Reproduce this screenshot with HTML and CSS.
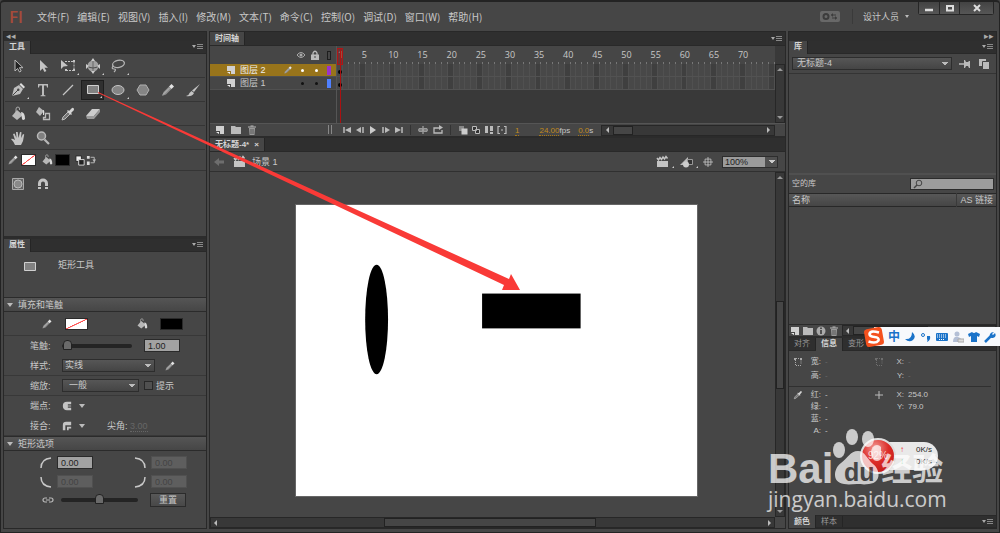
FILE: index.html
```
<!DOCTYPE html>
<html lang="zh-CN">
<head>
  <meta charset="UTF-8">
  <title>无标题-4</title>
  <link rel="stylesheet" href="styles.css">
</head>
<body>
  <!-- icon sprite -->
  <svg class="sprite">
    <symbol id="i-select" viewBox="0 0 16 16"><path d="M5 2v11l2.600-2.500L9.500 14l1.700-1-1.800-3.300H13z" fill="#222" stroke="#bbb"/></symbol>
    <symbol id="i-arrow" viewBox="0 0 16 16"><path d="M5 2v11l2.600-2.500L9.500 14l1.900-1-1.900-3.300H13z" fill="#c4c4c4"/></symbol>
    <symbol id="i-transform" viewBox="0 0 16 16"><path d="M1 2v9l2.500-2.500L8 8z" fill="#c4c4c4"/><path d="M5 3.500h9v9H5" fill="none" stroke="#c4c4c4" stroke-dasharray="2 1"/><path d="M13 2h2v2h-2zM13 11h2v2h-2zM5 11h2v2H5z" fill="#c4c4c4"/></symbol>
    <symbol id="i-rotate" viewBox="0 0 16 16"><circle cx="8" cy="8" r="5.500" fill="#a2a2a2"/><path d="M8 2v12" stroke="#666"/><path d="M2 8q6 4 12 0" stroke="#4a4a4a" fill="none"/><path d="M8 0l2 3H6zM8 16l2-3H6zM1 6l3 2-3 3zM15 6l-3 2 3 3z" fill="#ccc"/></symbol>
    <symbol id="i-lasso" viewBox="0 0 16 16"><ellipse cx="8.500" cy="6" rx="6" ry="3.500" transform="rotate(-12 8 6)" fill="none" stroke="#b5b5b5" stroke-width="1.300"/><path d="M3 8q-2 3 1 3t0 3" fill="none" stroke="#b5b5b5" stroke-width="1.200"/></symbol>
    <symbol id="i-pen" viewBox="0 0 16 16"><path d="M2 14l2-8 5-3 4 4-3 5z" fill="#bdbdbd"/><path d="M9.500 2.500L11 1l4 4-1.500 1.500z" fill="#ddd"/><path d="M2.500 13.500L8 8" stroke="#444"/><circle cx="8.300" cy="7.700" r="1.200" fill="#444"/></symbol>
    <symbol id="i-text" viewBox="0 0 16 16"><path d="M3 2h10v3.500h-1L11.500 3.500H9V13l1.500.5v.8h-5v-.8L7 13V3.500H4.500L4 5.500H3z" fill="#bbb"/></symbol>
    <symbol id="i-line" viewBox="0 0 16 16"><path d="M3 13L13 3" stroke="#c4c4c4" stroke-width="1.200"/></symbol>
    <symbol id="i-rect" viewBox="0 0 16 16"><path d="M2.500 3.500h11v8h-11z" fill="#828282" stroke="#d0d0d0"/></symbol>
    <symbol id="i-oval" viewBox="0 0 16 16"><ellipse cx="8" cy="8" rx="6" ry="4.500" fill="#858585" stroke="#c4c4c4"/></symbol>
    <symbol id="i-poly" viewBox="0 0 16 16"><path d="M5 3h6l3 5-3 5H5L2 8z" fill="#858585" stroke="#b0b0b0"/></symbol>
    <symbol id="i-pencil" viewBox="0 0 16 16"><path d="M2 14l1.500-4L9 4.500 11.500 7 6 12.500z" fill="#8f8f8f"/><path d="M9 4.500L11.500 7 14 4.500 11.500 2z" fill="#e4e4e4"/><path d="M3 12.500l6.500-6.500" stroke="#bbb"/></symbol>
    <symbol id="i-brush" viewBox="0 0 16 16"><path d="M15 2L7 8.500 9 10z" fill="#c4c4c4"/><path d="M6.500 9L9 11q-2 4-8 3 3-.5 3.500-3z" fill="#c4c4c4"/></symbol>
    <symbol id="i-bucket" viewBox="0 0 16 16"><path d="M6 6V3q0-2 2-2t1.500 3" fill="none" stroke="#aaa"/><path d="M7 4l6 5-6 5-5-4z" fill="#b8b8b8"/><path d="M11 6q4 0 4 7-2 2-3 0z" fill="#d8d8d8"/></symbol>
    <symbol id="i-ink" viewBox="0 0 16 16"><path d="M4 1l5 4-4 5-4-4z" fill="#b8b8b8"/><path d="M8 4q2 0 1 5H8z" fill="#ddd"/><path d="M10.500 7.500h4v6h-6v-2h2z" fill="none" stroke="#bbb" stroke-width="1.300"/></symbol>
    <symbol id="i-dropper" viewBox="0 0 16 16"><path d="M2 14l1-3 5-5 2 2-5 5z" fill="#777" stroke="#bbb"/><path d="M7 5l4 4 1-1-1-1 3-3q0-3-2-2L9 5 8 4z" fill="#d5d5d5"/></symbol>
    <symbol id="i-eraser" viewBox="0 0 16 16"><path d="M1 10l6-7h8l-6 7z" fill="#ccc"/><path d="M1 10h8v3H2zM9 10l6-7v3l-6 7z" fill="#999"/></symbol>
    <symbol id="i-hand" viewBox="0 0 16 16"><path d="M5 15q-1-3-4-6 1-1 4 1L3 4l1.500-.5L6.500 8 6 2h1.700L8.500 8 10 2l1.500.3L11 8l2-4 1.200.5L13 11l-2 4z" fill="#c4c4c4"/></symbol>
    <symbol id="i-zoom" viewBox="0 0 16 16"><circle cx="6.500" cy="6" r="4" fill="#808080" stroke="#b8b8b8" stroke-width="1.500"/><path d="M9.500 9.500l4.500 4.500" stroke="#b8b8b8" stroke-width="2.200"/></symbol>
    <symbol id="i-draw" viewBox="0 0 16 16"><path d="M2.500 2.500h11v11h-11z" fill="#666" stroke="#aaa"/><circle cx="8" cy="8" r="4" fill="#8a8a8a" stroke="#bbb"/></symbol>
    <symbol id="i-magnet" viewBox="0 0 16 16"><path d="M4.500 13V7.500a3.500 3.500 0 017 0V13" fill="none" stroke="#c4c4c4" stroke-width="3"/><path d="M3 10.500h3M10 10.500h3" stroke="#444"/></symbol>
    <symbol id="i-swap" viewBox="0 0 24 12"><path d="M1 1h6v6H1z" fill="#eee" stroke="#222"/><path d="M4 5h6v6H4z" fill="#222" stroke="#ddd"/><path d="M13 1h3v3h-3zM13 7h3v4h-3z" fill="#ddd"/><path d="M17 2.500h4v6h-4" fill="none" stroke="#bbb"/><path d="M19 5h4l-2 3z" fill="#bbb"/></symbol>
    <symbol id="i-menu" viewBox="0 0 12 8"><path d="M0 2h4L2 5z" fill="#aaa"/><path d="M5 1.500h6M5 3.500h6M5 5.500h6" stroke="#888"/></symbol>
    <symbol id="i-layer" viewBox="0 0 10 10"><path d="M1 1h8v8H5V6H1z" fill="#d0d0d0"/><path d="M1 7h3v2z" fill="#eee"/></symbol>
    <symbol id="i-folder" viewBox="0 0 10 10"><path d="M0 1h4l1 1h5v7H0z" fill="#bbb"/></symbol>
    <symbol id="i-trash" viewBox="0 0 10 10"><path d="M1 2h8M3.500 1h3" stroke="#bbb"/><path d="M2 3h6l-.5 7h-5z" fill="#999"/><path d="M4 4v5M6 4v5" stroke="#555"/></symbol>
    <symbol id="i-eye" viewBox="0 0 10 10"><path d="M1 5q4-5 8 0-4 5-8 0z" fill="none" stroke="#aaa"/><circle cx="5" cy="5" r="1.500" fill="#aaa"/></symbol>
    <symbol id="i-lock" viewBox="0 0 10 10"><path d="M3 5V3q2-3.500 4 0v2" fill="none" stroke="#bbb" stroke-width="1.300"/><path d="M1 4.500h8V10H1z" fill="#bbb"/><path d="M5 6v2" stroke="#444"/></symbol>
    <symbol id="i-first" viewBox="0 0 10 10"><path d="M2 2v6" stroke="#bbb" stroke-width="1.500"/><path d="M9 2v6L3 5z" fill="#bbb"/></symbol>
    <symbol id="i-prev" viewBox="0 0 10 10"><path d="M6 2v6L1 5z" fill="#bbb"/><path d="M8 2v6" stroke="#bbb" stroke-width="1.500"/></symbol>
    <symbol id="i-play" viewBox="0 0 10 10"><path d="M2 1v8l6-4z" fill="#ccc"/></symbol>
    <symbol id="i-loop" viewBox="0 0 10 10"><path d="M6 3H1v5h8V5" fill="none" stroke="#bbb" stroke-width="1.300"/><path d="M6 0v5l4-2.500z" fill="#bbb"/></symbol>
    <symbol id="i-center" viewBox="0 0 10 10"><path d="M0 5h10M5 1v8" stroke="#bbb"/><path d="M1 3.500h8v3H1z" fill="none" stroke="#999"/></symbol>
    <symbol id="i-onion" viewBox="0 0 10 10"><path d="M1 1h5v5H1z" fill="#888"/><path d="M3.500 3.500h6v6h-6z" fill="#ccc"/></symbol>
    <symbol id="i-outline" viewBox="0 0 10 10"><path d="M1.500 1.500h4v4h-4zM4.500 4.500h4v4h-4z" fill="#333" stroke="#bbb"/></symbol>
    <symbol id="i-multi" viewBox="0 0 10 10"><path d="M1 1h3v7H1zM6 1h3v5H6zM6 7h3v2H6z" fill="#bbb"/></symbol>
    <symbol id="i-range" viewBox="0 0 10 10"><path d="M3 1.500H1v7h2M7 1.500h2v7H7M4 5h2" fill="none" stroke="#bbb" stroke-width="1.200"/></symbol>
    <symbol id="i-clap" viewBox="0 0 16 14"><path d="M2 6h11v6H2z" fill="#c4c4c4"/><path d="M2 3l1.500 2L5 2.500l1.500 2L8 2l1.500 2L11 1.500l1.500 2" stroke="#c4c4c4" stroke-width="1.500" fill="none"/></symbol>
    <symbol id="i-symbols" viewBox="0 0 16 14"><path d="M1 10L9 2v8z" fill="#bbb"/><path d="M8.500 4.500h5v5h-5z" fill="#333" stroke="#999"/><circle cx="7" cy="9.500" r="3" fill="#ccc"/></symbol>
    <symbol id="i-target" viewBox="0 0 12 12"><path d="M6 0v12M0 6h12M2.500 2.500h7v7h-7z" fill="none" stroke="#c4c4c4"/></symbol>
    <symbol id="i-pin" viewBox="0 0 12 12"><path d="M0 6h6" stroke="#bbb" stroke-width="1.500"/><path d="M5 2h1l1 2h2l1-1h1v7h-1L9 8H7l-1 2H5z" fill="#bbb"/></symbol>
    <symbol id="i-newlib" viewBox="0 0 12 12"><path d="M1 1h7v7H1z" fill="#bbb"/><path d="M4.500 3.500h7v8h-7z" fill="#bbb" stroke="#444"/></symbol>
    <symbol id="i-info" viewBox="0 0 10 10"><circle cx="5" cy="5" r="4.500" fill="#aaa"/><path d="M5 1.500v1.500M5 4v4" stroke="#333" stroke-width="1.500"/></symbol>
    <symbol id="i-size" viewBox="0 0 10 10"><path d="M2.500 3v5.500H8M3 1.500h5V7" fill="none" stroke="#aaa" stroke-dasharray="1 1"/><path d="M1 1h2v2H1zM7 1h2v2H7z" fill="#aaa"/></symbol>
    <symbol id="i-cap" viewBox="0 0 12 12"><path d="M11 1H6q-5 0-5 5t5 5h5V8H7V4h4z" fill="#c4c4c4"/><path d="M5 6h6" stroke="#c4c4c4"/></symbol>
    <symbol id="i-join" viewBox="0 0 12 12"><path d="M11 1H5Q1 1 1 5v6h3V5h7z" fill="#c4c4c4"/><path d="M6 11V7h5v2H8v2z" fill="#c4c4c4"/></symbol>
    <symbol id="i-corner" viewBox="0 0 12 12"><path d="M1 11Q1 2 11 1" fill="none" stroke="#c8c8c8" stroke-width="1.500"/></symbol>
    <symbol id="i-link" viewBox="0 0 12 8"><path d="M5 6H3a2 2 0 010-4h2M7 2h2a2 2 0 010 4H7M4 4h4" fill="none" stroke="#bbb" stroke-width="1.200"/></symbol>
  </svg>

  <div class="app">
    <header class="menubar">
      <span class="logo">Fl</span>
      <nav class="menu">
        <a href="#">文件(F)</a>
        <a href="#">编辑(E)</a>
        <a href="#">视图(V)</a>
        <a href="#">插入(I)</a>
        <a href="#">修改(M)</a>
        <a href="#">文本(T)</a>
        <a href="#">命令(C)</a>
        <a href="#">控制(O)</a>
        <a href="#">调试(D)</a>
        <a href="#">窗口(W)</a>
        <a href="#">帮助(H)</a>
      </nav>
      <svg class="sync" viewBox="0 0 20 11"><rect width="20" height="11" rx="2" fill="#686868"/><circle cx="6" cy="5.500" r="2.500" fill="none" stroke="#3c3c3c" stroke-width="2"/><path d="M11 4h5M12 7h5" stroke="#3c3c3c"/><path d="M13 2v4l-2-2zM15 5v4l2-2z" fill="#3c3c3c"/></svg>
      <button class="workspace">设计人员 <i class="caret"></i></button>
      <div class="window-buttons">
        <button aria-label="最小化"><svg viewBox="0 0 10 10"><path d="M1 7h8" stroke="#ddd" stroke-width="2.500"/></svg></button>
        <button aria-label="最大化"><svg viewBox="0 0 10 10"><path d="M2 3h6v4.500H2z" fill="none" stroke="#ddd" stroke-width="2"/></svg></button>
        <button class="close" aria-label="关闭"><svg viewBox="0 0 10 10"><path d="M2 2l6 6M8 2L2 8" stroke="#ddd" stroke-width="2"/></svg></button>
      </div>
    </header>

    <main class="workbench">
      <!-- left dock -->
      <aside class="dock">
        <div class="dock-strip">◂◂</div>
        <section class="panel tools">
          <div class="tabs"><button class="tab active">工具</button><svg class="panel-menu"><use href="#i-menu"/></svg></div>
          <div class="tool-row">
            <button aria-label="选择"><svg><use href="#i-select"/></svg></button>
            <button aria-label="部分选取"><svg><use href="#i-arrow"/></svg></button>
            <button class="more" aria-label="任意变形"><svg><use href="#i-transform"/></svg></button>
            <button class="more" aria-label="3D 旋转"><svg><use href="#i-rotate"/></svg></button>
            <button class="more" aria-label="套索"><svg><use href="#i-lasso"/></svg></button>
          </div>
          <div class="tool-row">
            <button class="more" aria-label="钢笔"><svg><use href="#i-pen"/></svg></button>
            <button aria-label="文本"><svg><use href="#i-text"/></svg></button>
            <button aria-label="线条"><svg><use href="#i-line"/></svg></button>
            <button class="more selected" aria-label="矩形"><svg><use href="#i-rect"/></svg></button>
            <button class="more" aria-label="椭圆"><svg><use href="#i-oval"/></svg></button>
            <button aria-label="多角星形"><svg><use href="#i-poly"/></svg></button>
            <button aria-label="铅笔"><svg><use href="#i-pencil"/></svg></button>
            <button aria-label="刷子"><svg><use href="#i-brush"/></svg></button>
          </div>
          <div class="tool-row">
            <button aria-label="颜料桶"><svg><use href="#i-bucket"/></svg></button>
            <button aria-label="墨水瓶"><svg><use href="#i-ink"/></svg></button>
            <button aria-label="滴管"><svg><use href="#i-dropper"/></svg></button>
            <button aria-label="橡皮擦"><svg><use href="#i-eraser"/></svg></button>
          </div>
          <div class="tool-row">
            <button aria-label="手形"><svg><use href="#i-hand"/></svg></button>
            <button aria-label="缩放"><svg><use href="#i-zoom"/></svg></button>
          </div>
          <div class="color-row">
            <svg class="icon"><use href="#i-pencil"/></svg>
            <button class="swatch none" aria-label="笔触颜色"></button>
            <svg class="icon"><use href="#i-bucket"/></svg>
            <button class="swatch" aria-label="填充颜色"></button>
            <svg class="swap"><use href="#i-swap"/></svg>
          </div>
          <div class="tool-row last">
            <button aria-label="对象绘制"><svg><use href="#i-draw"/></svg></button>
            <button aria-label="贴紧至对象"><svg><use href="#i-magnet"/></svg></button>
          </div>
        </section>

        <section class="panel props">
          <div class="tabs"><button class="tab active">属性</button><svg class="panel-menu"><use href="#i-menu"/></svg></div>
          <div class="props-head">
            <svg class="icon big"><use href="#i-rect"/></svg>
            <span>矩形工具</span>
          </div>
          <h2 class="section-title"><i class="caret"></i>填充和笔触</h2>
          <div class="prop-row fills">
            <svg class="icon"><use href="#i-pencil"/></svg>
            <button class="swatch none wide" aria-label="笔触颜色"></button>
            <svg class="icon second"><use href="#i-bucket"/></svg>
            <button class="swatch wide" aria-label="填充颜色"></button>
          </div>
          <div class="prop-row plain">
            <label for="stroke">笔触:</label>
            <input id="stroke" class="slider" type="range" min="0" max="100" value="1">
            <input class="num" type="text" value="1.00" aria-label="笔触高度">
          </div>
          <div class="prop-row">
            <label for="line-style">样式:</label>
            <select id="line-style" class="drop style-drop"><option>实线</option></select>
            <svg class="icon"><use href="#i-pencil"/></svg>
          </div>
          <div class="prop-row">
            <label for="scale">缩放:</label>
            <select id="scale" class="drop scale-drop"><option>一般</option></select>
            <input id="hint" class="check" type="checkbox"><label class="hint-label" for="hint">提示</label>
          </div>
          <div class="prop-row plain">
            <span class="label">端点:</span>
            <button class="cap-btn" aria-label="端点"><svg><use href="#i-cap"/></svg><i class="caret"></i></button>
          </div>
          <div class="prop-row">
            <span class="label">接合:</span>
            <button class="cap-btn" aria-label="接合"><svg><use href="#i-join"/></svg><i class="caret"></i></button>
            <span class="miter">尖角: <em>3.00</em></span>
          </div>
          <h2 class="section-title"><i class="caret"></i>矩形选项</h2>
          <div class="corners">
            <svg class="corner"><use href="#i-corner"/></svg>
            <input class="num" type="text" value="0.00" aria-label="左上角半径">
            <svg class="corner tr"><use href="#i-corner"/></svg>
            <input class="num" type="text" value="0.00" disabled aria-label="右上角半径">
            <svg class="corner bl"><use href="#i-corner"/></svg>
            <input class="num" type="text" value="0.00" disabled aria-label="左下角半径">
            <svg class="corner br"><use href="#i-corner"/></svg>
            <input class="num" type="text" value="0.00" disabled aria-label="右下角半径">
          </div>
          <div class="reset-row">
            <svg class="link-icon"><use href="#i-link"/></svg>
            <input class="slider" type="range" min="0" max="100" value="50" aria-label="圆角半径">
            <button class="reset">重置</button>
          </div>
        </section>
      </aside>

      <!-- timeline and stage -->
      <div class="center">
        <section class="timeline">
          <div class="tabs"><button class="tab active">时间轴</button><svg class="panel-menu"><use href="#i-menu"/></svg></div>
          <div class="timeline-body">
            <div class="layers">
              <div class="layer-head"><svg class="small"><use href="#i-eye"/></svg><svg class="small"><use href="#i-lock"/></svg><i class="outline-box"></i></div>
              <div class="layer active"><svg class="small"><use href="#i-layer"/></svg><span>图层 2</span><svg class="small edit"><use href="#i-pencil"/></svg><i class="dot"></i><i class="dot"></i><i class="chip purple"></i></div>
              <div class="layer"><svg class="small"><use href="#i-layer"/></svg><span>图层 1</span><i class="dot"></i><i class="dot"></i><i class="chip blue"></i></div>
            </div>
            <div class="frames">
              <div class="ruler">
                <span class="first">1</span><span>5</span><span>10</span><span>15</span><span>20</span><span>25</span><span>30</span><span>35</span><span>40</span><span>45</span><span>50</span><span>55</span><span>60</span><span>65</span><span>70</span><span class="rest"></span>
              </div>
              <div class="frame-row"><i class="keyframe"></i></div>
              <div class="frame-row"><i class="keyframe"></i></div>
              <div class="playhead"></div>
            </div>
            <div class="vscroll"><i class="up"></i><i class="down"></i></div>
          </div>
          <div class="timeline-bar">
            <div class="layer-tools">
              <button aria-label="新建图层"><svg class="small"><use href="#i-layer"/></svg></button>
              <button aria-label="新建文件夹"><svg class="small"><use href="#i-folder"/></svg></button>
              <button aria-label="删除"><svg class="small"><use href="#i-trash"/></svg></button>
              <i class="grip"></i>
            </div>
            <div class="playback">
              <button aria-label="转到第一帧"><svg class="small"><use href="#i-first"/></svg></button>
              <button aria-label="后退一帧"><svg class="small"><use href="#i-prev"/></svg></button>
              <button aria-label="播放"><svg class="small"><use href="#i-play"/></svg></button>
              <button aria-label="前进一帧"><svg class="small flip"><use href="#i-prev"/></svg></button>
              <button aria-label="转到最后一帧"><svg class="small flip"><use href="#i-first"/></svg></button>
            </div>
            <div class="playback">
              <button aria-label="帧居中"><svg class="small"><use href="#i-center"/></svg></button>
              <button aria-label="循环"><svg class="small"><use href="#i-loop"/></svg></button>
            </div>
            <div class="playback">
              <button aria-label="绘图纸外观"><svg class="small"><use href="#i-onion"/></svg></button>
              <button aria-label="绘图纸外观轮廓"><svg class="small"><use href="#i-outline"/></svg></button>
              <button aria-label="编辑多个帧"><svg class="small"><use href="#i-multi"/></svg></button>
              <button aria-label="修改标记"><svg class="small"><use href="#i-range"/></svg></button>
            </div>
            <div class="stats"><span><b>1</b></span><span><b>24.00</b>fps</span><span><b>0.0</b>s</span></div>
            <div class="hscroll"><i class="left"></i><i class="thumb"></i><i class="right"></i></div>
          </div>
        </section>

        <section class="document">
          <div class="tabs"><button class="tab active doc-tab">无标题-4* <span>×</span></button></div>
          <div class="scene-bar">
            <svg class="back" viewBox="0 0 10 10"><path d="M0 5l5-4v2.500h5v3H5V9z" fill="#6e6e6e"/></svg>
            <svg class="scene-icon"><use href="#i-clap"/></svg>
            <span>场景 1</span>
            <div class="scene-tools">
              <button class="more" aria-label="编辑场景"><svg class="scene-icon"><use href="#i-clap"/></svg></button>
              <button class="more" aria-label="编辑元件"><svg class="scene-icon"><use href="#i-symbols"/></svg></button>
              <button aria-label="舞台居中"><svg class="small"><use href="#i-target"/></svg></button>
              <select class="zoom" aria-label="缩放比例"><option>100%</option></select>
            </div>
          </div>
          <div class="pasteboard">
            <div class="canvas">
              <svg class="stage" viewBox="0 0 403 293">
                <rect width="403" height="293" fill="#fff"/>
                <ellipse cx="81" cy="115" rx="11.500" ry="55"/>
                <rect x="187" y="89" width="99" height="35"/>
              </svg>
            </div>
            <div class="vscroll"><i class="up"></i><i class="thumb"></i><i class="down"></i></div>
          </div>
          <div class="hscroll doc-scroll"><i class="left"></i><i class="thumb"></i><i class="right"></i></div>
        </section>
      </div>

      <!-- right dock -->
      <aside class="dock">
        <div class="dock-strip right">▸▸</div>
        <section class="panel library">
          <div class="tabs"><button class="tab active">库</button><svg class="panel-menu"><use href="#i-menu"/></svg></div>
          <div class="lib-doc">
            <select class="drop" aria-label="库文档"><option>无标题-4</option></select>
            <button aria-label="固定"><svg><use href="#i-pin"/></svg></button>
            <button aria-label="新建库面板"><svg><use href="#i-newlib"/></svg></button>
          </div>
          <div class="lib-preview"></div>
          <div class="lib-search">
            <span>空的库</span>
            <div class="search-box">
              <svg viewBox="0 0 10 10"><circle cx="6" cy="4" r="2.800" fill="none" stroke="#444"/><path d="M4 6L1 9" stroke="#444" stroke-width="1.500"/></svg>
              <input type="text" aria-label="搜索库">
            </div>
          </div>
          <table class="lib-table">
            <thead><tr><th>名称</th><th class="as-link">AS 链接</th></tr></thead>
          </table>
          <div class="lib-list"></div>
          <div class="lib-bar">
            <button aria-label="新建元件"><svg class="small"><use href="#i-layer"/></svg></button>
            <button aria-label="新建文件夹"><svg class="small"><use href="#i-folder"/></svg></button>
            <button aria-label="属性"><svg class="small"><use href="#i-info"/></svg></button>
            <button aria-label="删除"><svg class="small"><use href="#i-trash"/></svg></button>
            <div class="hscroll"><i class="left"></i><i class="thumb"></i></div>
          </div>
        </section>

        <section class="panel info">
          <div class="tabs"><button class="tab">对齐</button><button class="tab active">信息</button><button class="tab">变形</button><svg class="panel-menu"><use href="#i-menu"/></svg></div>
          <div class="info-grid dim">
            <svg class="small"><use href="#i-size"/></svg><b>宽:</b><span>-</span><svg class="small faded"><use href="#i-size"/></svg><b>X:</b><span>-</span>
            <i></i><b>高:</b><span>-</span><i></i><b>Y:</b><span>-</span>
          </div>
          <div class="info-grid colors">
            <svg class="small"><use href="#i-dropper"/></svg><b>红:</b><span>-</span><svg class="small" viewBox="0 0 10 10"><path d="M5 1v8M1 5h8" stroke="#bbb"/></svg><b>X:</b><span>254.0</span>
            <i></i><b>绿:</b><span>-</span><i></i><b>Y:</b><span>79.0</span>
            <i></i><b>蓝:</b><span>-</span><i></i><i></i><i></i>
            <i></i><b>A:</b><span>-</span>
          </div>
        </section>
        <div class="tabs bottom-tabs"><button class="tab active">颜色</button><button class="tab">样本</button><svg class="panel-menu"><use href="#i-menu"/></svg></div>
      </aside>
    </main>
  </div>

  <!-- arrow from the rectangle tool to the drawn shape -->
  <svg class="pointer" viewBox="0 0 424 202"><path d="M0 0L411 187l2-5 9 16-18 0 2-5L0 1z" fill="#f93a37"/></svg>

  <!-- input method bar -->
  <div class="ime">
    <svg class="ime-logo" viewBox="0 0 20 20"><rect x="1" y="1" width="18" height="18" rx="3" transform="rotate(-10 10 10)" fill="#f4511e"/><path d="M15 5.500Q6 3 5.500 7q0 2.500 5 3t4 3.500Q12 17 4.500 14.500" fill="none" stroke="#fff" stroke-width="2.600"/></svg>
    <span>中</span>
    <svg viewBox="0 0 12 12"><path d="M8 1q5 4 1 8-4 3-8-1 7 1 7-7z" fill="#1a73c9"/></svg>
    <svg viewBox="0 0 12 12"><circle cx="3" cy="4" r="1.500" fill="none" stroke="#1a73c9"/><path d="M7 5h3q1 4-3 6 1-2 0-3z" fill="#1a73c9"/></svg>
    <svg viewBox="0 0 12 12"><rect y="2" width="12" height="8" rx="1" fill="#1a73c9"/><path d="M1 4h10M1 6h10M3 8.500h6" stroke="#fff" stroke-dasharray="1 1"/></svg>
    <svg viewBox="0 0 12 12"><circle cx="5" cy="3" r="2.500" fill="#b3bfd6"/><path d="M1 11q0-6 5-5 4 1 4 5z" fill="#b3bfd6"/><path d="M6 8h6v3H6z" fill="#ddd" stroke="#aaa"/></svg>
    <svg viewBox="0 0 12 12"><path d="M0 3l4-2q2 2 4 0l4 2-1 3-2-1v6H3V5L1 6z" fill="#1a73c9"/></svg>
    <svg viewBox="0 0 12 12"><path d="M1 11l6-6" stroke="#1a73c9" stroke-width="2.500"/><path d="M10 1L8 3l1 1 2-2q2 4-2 5-4 0-3-4 1-2 4-2z" fill="#1a73c9"/></svg>
  </div>

  <!-- network speed ball -->
  <div class="speed">
    <div class="speed-rates"><span><i class="rate-up">↑</i>0K/s</span><span><i class="rate-down">↓</i>0K/s</span></div>
    <div class="speed-ball">92%</div>
  </div>

  <div class="watermark">
    <div class="mark-top">
      <span>Bai</span>
      <svg viewBox="0 0 48 56"><g fill="#fff"><ellipse cx="6" cy="21" rx="6" ry="8"/><ellipse cx="19" cy="8" rx="6" ry="8"/><ellipse cx="35" cy="10" rx="6" ry="8"/><ellipse cx="44" cy="24" rx="6" ry="8"/><path d="M25 22c7 0 9 8 15 13 7 5 9 19-4 20-6 1-8 0-12 0s-8 1-13 0C-2 53 1 39 8 34c7-5 9-12 17-12z"/></g><text x="11" y="52">du</text></svg>
      <span class="cn">经验</span>
    </div>
    <div class="mark-url">jingyan.baidu.com</div>
  </div>
</body>
</html>
```
FILE: styles.css
```
* {
  box-sizing: border-box;
}
body {
  margin: 0;
  height: 100vh;
  overflow: hidden;
  position: relative;
  background: #464646;
  color: #c8c8c8;
  font-family: "Liberation Sans", "Noto Sans CJK SC", sans-serif;
  font-size: 9px;
  line-height: 12px;
}
button, input, select {
  font: inherit;
  color: inherit;
  margin: 0;
  padding: 0;
  border: 0;
  background: none;
  min-width: 0;
}
button {
  position: relative;
  display: flex;
  align-items: center;
  justify-content: center;
}
a {
  color: inherit;
  text-decoration: none;
}
i, em {
  font-style: normal;
}
svg {
  display: block;
  flex: none;
}
.sprite {
  display: none;
}
.app {
  height: 100%;
  display: flex;
  flex-direction: column;
  border: 1px solid #232323;
  border-top-width: 2px;
  border-radius: 4px 4px 0 0;
}

/* menu bar */
.menubar {
  height: 29px;
  display: flex;
  align-items: center;
  padding-left: 8px;
  flex: none;
}
.logo {
  width: 28px;
  color: #a64b3a;
  font-family: "Open Sans", sans-serif;
  font-size: 17px;
  font-weight: 600;
}
.menu {
  display: flex;
  gap: 8px;
  flex: 1;
  font-family: "Noto Sans CJK SC", sans-serif;
  font-size: 10px;
  line-height: 10px;
}
.sync {
  width: 20px;
  height: 11px;
}
.workspace {
  font-size: 9px;
  margin-left: 12px;
  padding-left: 10px;
  border-left: 1px solid #3a3a3a;
  height: 15px;
  gap: 6px;
}
.window-buttons {
  display: flex;
  align-self: flex-start;
  margin: 0 5px 0 9px;
  border: 1px solid #262626;
  border-top: 0;
  border-radius: 0 0 3px 3px;
}
.window-buttons button {
  width: 20px;
  height: 12px;
  background: linear-gradient(#434343, #565656);
}
.window-buttons button + button {
  border-left: 1px solid #262626;
}
.window-buttons .close {
  width: 34px;
}
.window-buttons svg {
  width: 10px;
  height: 10px;
}
.caret {
  display: inline-block;
  border: 3px solid transparent;
  border-top: 4px solid #bbb;
  border-bottom: 0;
}
.workspace .caret {
  border-width: 3px 2px 0;
}

/* docks and panels */
.workbench {
  flex: 1;
  min-height: 0;
  display: grid;
  grid-template-columns: 204px 1fr 209px;
  gap: 2px;
  padding: 0 2px 3px;
}
.dock, .center {
  display: flex;
  flex-direction: column;
  min-width: 0;
  border: 1px solid #282828;
}
.dock-strip {
  height: 9px;
  background: #2e2e2e;
  color: #aaa;
  line-height: 8px;
  padding: 0 2px;
  flex: none;
}
.dock-strip.right {
  text-align: right;
}
.tabs {
  display: flex;
  align-items: center;
  height: 13px;
  background: #2f2f2f;
  border-bottom: 1px solid #292929;
  font-size: 8px;
  flex: none;
}
.tab {
  height: 100%;
  padding: 0 5px;
  color: #999;
  border-right: 1px solid #252525;
}
.tab.active {
  height: 13px;
  background: #464646;
  color: #d5d5d5;
  font-weight: bold;
}
.panel-menu {
  width: 12px;
  height: 8px;
  margin: 0 2px 0 auto;
}
.tools {
  height: 198px;
  border-bottom: 3px solid #2c2c2c;
  flex: none;
}
.tool-row {
  display: grid;
  grid-template-columns: repeat(8, 1fr);
  height: 24px;
  align-items: center;
  margin: 0 1px;
  border-bottom: 1px solid #353535;
}
.tool-row.last {
  border: 0;
  height: 26px;
}
.tool-row button {
  height: 20px;
}
.tool-row svg {
  width: 16px;
  height: 16px;
}
.tool-row .selected {
  background: #303030;
  border: 1px solid #1e1e1e;
  margin: 0 1px;
}
.more::after {
  content: "";
  position: absolute;
  right: 1px;
  bottom: 1px;
  border: 1px solid #ccc;
  border-left-color: transparent;
  border-top-color: transparent;
}
.icon {
  width: 12px;
  height: 12px;
}
.color-row {
  display: flex;
  align-items: center;
  height: 21px;
  gap: 2px;
  padding-left: 3px;
  border-bottom: 1px solid #353535;
}
.swatch {
  width: 15px;
  height: 12px;
  background: #000;
  border: 1px solid #2a2a2a;
  margin-right: 3px;
}
.swatch.none {
  background: linear-gradient(to bottom right, #fff 46%, #f55 48%, #f55 52%, #fff 54%);
}
.swatch.wide {
  width: 23px;
  margin: 0 0 0 12px;
}
.swap {
  width: 22px;
  height: 11px;
}

/* properties */
.props-head {
  display: flex;
  height: 45px;
  padding: 7px 0 0 18px;
  gap: 20px;
}
.props-head .big {
  width: 16px;
  height: 16px;
}
.section-title {
  display: flex;
  align-items: center;
  gap: 5px;
  height: 15px;
  margin: 0;
  padding-left: 3px;
  font-size: 9px;
  font-weight: normal;
  background: linear-gradient(#555, #464646);
  border-top: 1px solid #2b2b2b;
  border-bottom: 1px solid #2b2b2b;
}
.prop-row {
  display: flex;
  align-items: center;
  height: 20px;
  padding-left: 26px;
  border-bottom: 1px solid #383838;
}
.prop-row.plain {
  border-color: transparent;
}
.prop-row.fills {
  height: 24px;
  padding-left: 37px;
}
.fills .second {
  margin-left: 48px;
}
.prop-row > label:first-child, .label {
  width: 32px;
  flex: none;
}
.slider {
  appearance: none;
  width: 70px;
  height: 12px;
}
.slider::-webkit-slider-runnable-track {
  height: 4px;
  background: #242424;
  border-radius: 2px;
}
.slider::-webkit-slider-thumb {
  appearance: none;
  width: 9px;
  height: 10px;
  margin-top: -4px;
  background: #6a6a6a;
  border: 1px solid #222;
  border-radius: 4px 4px 0 0;
}
.num {
  width: 36px;
  height: 13px;
  padding: 0 3px;
  background: #a2a2a2;
  border: 1px solid #2a2a2a;
  color: #222;
  line-height: 11px;
}
.num:disabled {
  background: #5e5e5e;
  border-color: #505050;
  color: #444;
}
.prop-row .num {
  margin-left: 12px;
}
.drop {
  appearance: none;
  height: 13px;
  padding: 0 14px 0 2px;
  border: 1px solid #2d2d2d;
  background:
    linear-gradient(to bottom right, #bbb 50%, transparent 51%) right 3px center / 3px 4px no-repeat,
    linear-gradient(to bottom left, #bbb 50%, transparent 51%) right 6px center / 3px 4px no-repeat,
    linear-gradient(#565656, #454545);
  line-height: 11px;
}
.style-drop {
  width: 93px;
  margin-right: 9px;
}
.scale-drop {
  width: 77px;
  margin-right: 5px;
  padding-left: 6px;
}
.check {
  appearance: none;
  width: 9px;
  height: 9px;
  border: 1px solid #282828;
  background: #505050;
}
.hint-label {
  margin-left: 3px;
}
.cap-btn {
  gap: 7px;
}
.cap-btn svg {
  width: 10px;
  height: 10px;
}
.miter {
  margin-left: 22px;
}
.miter em {
  color: #666;
  border-bottom: 1px dotted #666;
}
.corners {
  display: grid;
  grid-template-columns: 12px 36px 48px 36px;
  column-gap: 5px;
  row-gap: 6px;
  padding: 5px 0 0 36px;
  align-items: center;
}
.corner {
  width: 12px;
  height: 12px;
}
.corner.tr, .corner.br {
  justify-self: end;
}
.corner.tr {
  transform: scaleX(-1);
}
.corner.bl {
  transform: scaleY(-1);
}
.corner.br {
  transform: rotate(180deg);
}
.reset-row {
  display: flex;
  align-items: center;
  margin-top: 5px;
  padding-left: 38px;
}
.reset-row .slider {
  width: 77px;
  margin: 0 12px 0 7px;
}
.link-icon {
  width: 12px;
  height: 8px;
}
.reset {
  width: 36px;
  height: 14px;
  border: 1px solid #2b2b2b;
  background: linear-gradient(#585858, #484848);
}

/* timeline */
.center .tabs {
  height: 14px;
}
.timeline {
  border-bottom: 2px solid #2b2b2b;
}
.timeline-body {
  display: grid;
  grid-template-columns: 127px 1fr 10px;
  height: 77px;
  background: #393939;
}
.layers {
  border-right: 1px solid #555;
}
.layer-head {
  display: flex;
  justify-content: flex-end;
  align-items: center;
  gap: 4px;
  height: 18px;
  padding-right: 5px;
  background: #464646;
}
.outline-box {
  width: 4px;
  height: 9px;
  border: 1px solid #1d1d1d;
  margin-left: 3px;
}
.small {
  width: 10px;
  height: 10px;
}
.layer {
  display: flex;
  align-items: center;
  height: 13px;
  padding: 0 5px 0 16px;
  background: #464646;
  border-bottom: 1px solid #505050;
}
.layer span {
  flex: 1;
  padding-left: 4px;
}
.layer.active {
  background: #98741b;
  color: #eee;
}
.edit {
  margin-right: 8px;
}
.dot {
  width: 3px;
  height: 3px;
  margin-right: 11px;
  border-radius: 50%;
  background: #111;
}
.dot + .dot {
  margin-right: 9px;
}
.active .dot {
  background: #fff;
}
.chip {
  width: 4px;
  height: 9px;
}
.chip.purple {
  background: #9a33cc;
}
.chip.blue {
  background: #4f80ff;
}
.frames {
  position: relative;
  min-width: 0;
}
.ruler {
  display: flex;
  height: 18px;
  padding-top: 3px;
  background: repeating-linear-gradient(to right, transparent 0, transparent calc(100% / 75 - 1px), #777 calc(100% / 75 - 1px), #777 calc(100% / 75)) 0 100% / 100% 2px no-repeat #464646;
  font-family: "Open Sans", sans-serif;
}
.ruler span {
  flex: 5 1 0;
  text-align: center;
}
.ruler .first {
  flex: 2 1 0;
  text-align: left;
  padding-left: 1px;
}
.ruler .rest {
  flex: 3 1 0;
}
.frame-row {
  display: flex;
  align-items: flex-end;
  height: 13px;
  padding: 0 0 2px 1px;
  border-bottom: 1px solid #525252;
  background: repeating-linear-gradient(to right, transparent 0, transparent calc(100% / 75 - 1px), #505050 calc(100% / 75 - 1px), #505050 calc(100% / 75)), repeating-linear-gradient(to right, #484848 0, #484848 calc(100% / 75 * 4), #3f3f3f calc(100% / 75 * 4), #3f3f3f calc(100% / 75 * 5));
}
.keyframe {
  width: 4px;
  height: 4px;
  border-radius: 50%;
  background: #000;
}
.playhead {
  position: absolute;
  left: 0;
  top: 2px;
  bottom: 0;
  width: 6px;
  background: linear-gradient(#a11, #a11) 3px 0 / 1px 100% no-repeat;
}
.playhead::before {
  content: "";
  display: block;
  height: 15px;
  border: 1px solid #b01515;
  background: rgba(190, 20, 20, 0.3);
}
.vscroll, .hscroll {
  display: flex;
  align-items: center;
  background: #383838;
  border: 1px solid #272727;
}
.vscroll {
  flex-direction: column;
}
.timeline-body .vscroll {
  margin-top: 18px;
  justify-content: space-between;
  padding: 3px 0;
}
.up, .down, .left, .right {
  flex: none;
}
.up, .down {
  border: 3px solid transparent;
}
.up {
  border-top: 0;
  border-bottom-color: #999;
}
.down {
  border-bottom: 0;
  border-top-color: #999;
}
.hscroll .left, .hscroll .right {
  border: 3px solid transparent;
}
.hscroll .left {
  border-left: 0;
  border-right-color: #bbb;
}
.hscroll .right {
  border-right: 0;
  border-left-color: #bbb;
  margin-left: auto;
}
.thumb {
  background: #464646;
  border: 1px solid #222;
}
.timeline-bar {
  display: flex;
  align-items: center;
  height: 13px;
  padding-right: 10px;
  border-top: 1px solid #555;
}
.layer-tools {
  display: flex;
  gap: 6px;
  width: 127px;
  padding: 0 5px;
}
.grip {
  width: 4px;
  height: 9px;
  margin-left: auto;
  border: solid #888;
  border-width: 0 1px;
}
.playback {
  display: flex;
  gap: 3px;
  padding: 0 6px 0 5px;
}
.playback + .playback {
  gap: 5px;
  border-left: 1px solid #333;
  padding: 0 7px;
}
.playback + .playback + .playback {
  gap: 3px;
  padding-right: 2px;
}
.flip {
  transform: scaleX(-1);
}
.stats {
  display: flex;
  width: 92px;
  padding-left: 6px;
  font-size: 8px;
  line-height: 9px;
}
.stats > :nth-child(1) {
  margin-right: 20px;
}
.stats > :nth-child(2) {
  margin-right: 8px;
}
.stats b {
  color: #c18a1c;
  font-weight: normal;
  border-bottom: 1px dotted #a77718;
}
.timeline-bar .hscroll {
  flex: 1;
  height: 11px;
  padding: 0 4px;
}
.timeline-bar .thumb {
  width: 20px;
  height: 9px;
  margin-left: 4px;
}

/* document window */
.document {
  flex: 1;
  min-height: 0;
  display: flex;
  flex-direction: column;
}
.doc-tab {
  gap: 5px;
}
.scene-bar {
  display: flex;
  align-items: center;
  height: 20px;
  padding: 0 7px 0 4px;
  border-bottom: 1px solid #303030;
  flex: none;
}
.back {
  width: 10px;
  height: 10px;
  margin-right: 8px;
}
.scene-icon {
  width: 16px;
  height: 14px;
  margin-right: 4px;
}
.scene-tools {
  display: flex;
  align-items: center;
  gap: 4px;
  margin-left: auto;
}
.zoom {
  appearance: none;
  width: 56px;
  height: 12px;
  margin-left: 5px;
  padding: 0 2px;
  border: 1px solid #2d2d2d;
  color: #222;
  line-height: 10px;
  background:
    linear-gradient(to bottom right, #ccc 50%, transparent 51%) right 2px center / 3px 4px no-repeat,
    linear-gradient(to bottom left, #ccc 50%, transparent 51%) right 5px center / 3px 4px no-repeat,
    linear-gradient(to right, #9b9b9b calc(100% - 12px), #505050 0);
}
.pasteboard {
  flex: 1;
  min-height: 0;
  display: grid;
  grid-template-columns: 1fr 10px;
}
.canvas {
  display: flex;
  align-items: center;
  justify-content: center;
  min-width: 0;
  padding: 12px 0 0 8px;
}
.stage {
  width: 72%;
  outline: 1px solid #666;
}
.pasteboard .vscroll {
  padding: 3px 0;
}
.pasteboard .thumb {
  width: 8px;
  height: 26%;
  margin: 122px 0 auto;
}
.doc-scroll {
  height: 11px;
  padding: 0 3px;
  margin-right: 10px;
  flex: none;
}
.doc-scroll .thumb {
  width: 38%;
  height: 9px;
  margin-left: 30%;
}

/* library */
.library {
  display: flex;
  flex-direction: column;
  height: 297px;
  border-bottom: 2px solid #2c2c2c;
  flex: none;
}
.lib-doc {
  display: flex;
  align-items: center;
  gap: 7px;
  height: 20px;
  padding: 0 6px 0 3px;
  border-bottom: 1px solid #343434;
}
.lib-doc .drop {
  flex: 1;
  padding-left: 4px;
}
.lib-doc svg {
  width: 12px;
  height: 12px;
}
.lib-preview {
  height: 101px;
  border-bottom: 2px solid #505050;
}
.lib-search {
  display: flex;
  align-items: center;
  justify-content: space-between;
  height: 18px;
  padding: 0 2px 0 3px;
  font-size: 8px;
}
.search-box {
  display: flex;
  align-items: center;
  width: 84px;
  height: 12px;
  padding-left: 2px;
  background: #9d9d9d;
  border: 1px solid #2c2c2c;
}
.search-box svg {
  width: 10px;
  height: 10px;
}
.search-box input {
  flex: 1;
  height: 10px;
}
.lib-table {
  width: 100%;
  border-collapse: collapse;
  background: linear-gradient(#585858, #454545);
  border: solid #282828;
  border-width: 1px 0;
}
.lib-table th {
  height: 13px;
  padding: 0 3px;
  font-weight: normal;
  text-align: left;
}
.lib-table .as-link {
  width: 38px;
  border-left: 1px solid #3a3a3a;
  white-space: nowrap;
}
.lib-list {
  flex: 1;
}
.lib-bar {
  display: flex;
  align-items: center;
  gap: 3px;
  height: 12px;
  padding-left: 1px;
  border-top: 1px solid #2a2a2a;
}
.lib-bar .hscroll {
  flex: 1;
  height: 11px;
  padding-left: 3px;
}
.lib-bar .thumb {
  width: 75px;
  height: 9px;
  margin-left: 4px;
}

/* info */
.info {
  flex: 1;
}
.info-grid {
  display: grid;
  grid-template-columns: 10px 14px 45px 10px 16px 1fr;
  column-gap: 4px;
  padding: 4px 0 3px 4px;
  margin-right: 5px;
  font-size: 8px;
  align-items: center;
}
.info-grid b {
  font-weight: normal;
  text-align: right;
  white-space: nowrap;
}
.dim {
  grid-auto-rows: 14px;
  border-bottom: 1px solid #303030;
}
.dim span {
  color: #6a6a6a;
}
.colors {
  grid-auto-rows: 12px;
  padding-top: 2px;
}
.faded {
  opacity: 0.4;
}
.bottom-tabs {
  border-top: 1px solid #292929;
}

/* floating layers */
.pointer {
  position: absolute;
  left: 98px;
  top: 92px;
  width: 424px;
  height: 202px;
}
.ime {
  position: absolute;
  right: 0;
  top: 327px;
  width: 136px;
  height: 19px;
  display: flex;
  align-items: center;
  gap: 4px;
  background: linear-gradient(to right, transparent 10px, #f7f9fc 10px);
  color: #1a73c9;
  font-size: 12px;
  font-weight: bold;
}
.ime svg {
  width: 12px;
  height: 12px;
}
.ime .ime-logo {
  width: 20px;
  height: 20px;
}
.speed {
  position: absolute;
  right: 62px;
  top: 438px;
  width: 78px;
  height: 36px;
  display: flex;
  align-items: center;
}
.speed-ball {
  position: absolute;
  left: 0;
  top: 0;
  width: 36px;
  height: 36px;
  border-radius: 50%;
  border: 2px solid #ddd;
  background: radial-gradient(circle at 40% 25%, #f29a95, #dc2b27 45%, #b81814);
  color: #f6d5d2;
  text-align: center;
  font-size: 10px;
  line-height: 32px;
}
.speed-rates {
  flex: 1;
  height: 28px;
  margin-left: 20px;
  padding: 2px 6px 0 20px;
  border-radius: 0 14px 14px 0;
  background: #e9e9e9;
  color: #222;
  font-size: 8px;
}
.speed-rates span {
  display: flex;
  justify-content: space-between;
}
.rate-up {
  color: #e33;
}
.rate-down {
  color: #2a4;
}
.watermark {
  position: absolute;
  right: 55px;
  bottom: 20px;
  width: 177px;
  opacity: 0.72;
  color: #fff;
}
.mark-top {
  display: flex;
  align-items: flex-end;
  font-size: 42px;
  font-weight: bold;
  line-height: 33px;
  white-space: nowrap;
}
.mark-top svg {
  width: 48px;
  height: 56px;
}
.mark-top text {
  font-size: 25px;
  fill: #464646;
}
.mark-top .cn {
  font-size: 31px;
  line-height: 31px;
}
.mark-url {
  font-family: "Open Sans", sans-serif;
  font-size: 21px;
  line-height: 28px;
}
```
